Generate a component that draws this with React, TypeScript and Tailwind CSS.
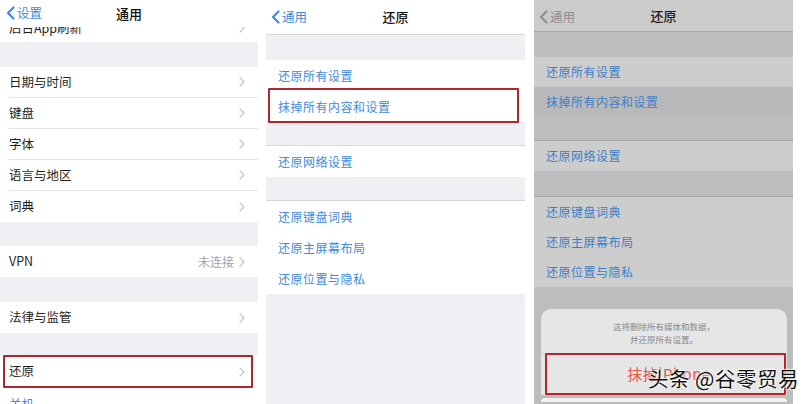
import React from 'react';

const font = { fontFamily: '"Noto Sans CJK SC", "Noto Sans", sans-serif' };

const Chevron = ({ color = '#c4c4c8' }: { color?: string }) => (
  <svg width="6" height="10" viewBox="0 0 6 10" fill="none">
    <polyline points="1,1 5,5 1,9" stroke={color} strokeWidth="1.2" strokeLinecap="round" strokeLinejoin="round" />
  </svg>
);

const BackChevron = ({ color }: { color: string }) => (
  <svg width="9" height="14" viewBox="0 0 9 14" fill="none">
    <polyline points="7.5,1.5 2,7 7.5,12.5" stroke={color} strokeWidth="2.2" strokeLinecap="round" strokeLinejoin="round" />
  </svg>
);

const Row = ({ label, right, last }: { label: string; right?: string; last?: boolean }) => (
  <div className="h-[31px] shrink-0 flex items-center pl-[9px] bg-white">
    <div className={`flex-1 h-full flex items-center pr-[13px] ${last ? '' : 'border-b border-[#e3e3e6]'}`}>
      <span className="flex-1 text-[12.5px] text-[#1f1f1f]">{label}</span>
      {right && <span className="text-[12px] text-[#a3a3a8] mr-[5px]">{right}</span>}
      <Chevron />
    </div>
  </div>
);

const LeftPanel = () => (
  <div className="w-[258px] h-full bg-[#efeff4] flex flex-col overflow-hidden">
    <div className="h-[27px] shrink-0 bg-white relative z-10 flex items-center justify-center">
      <div className="absolute left-[6px] top-[5px] flex items-center gap-[2px] text-[#3d8ae0] text-[12.5px] leading-[16px]">
        <BackChevron color="#3d8ae0" />
        <span>设置</span>
      </div>
      <span className="text-[13px] text-[#111] font-medium">通用</span>
    </div>
    <div className="h-[15px] shrink-0 bg-white overflow-hidden flex items-start pl-[9px] pr-[13px]">
      <span className="flex-1 text-[12.5px] text-[#1f1f1f] leading-[16px] -mt-[7px]">后台App刷新</span>
      <div className="-mt-[4px]"><Chevron /></div>
    </div>
    <div className="h-[25px] shrink-0" />
    <Row label="日期与时间" />
    <Row label="键盘" />
    <Row label="字体" />
    <Row label="语言与地区" />
    <Row label="词典" last />
    <div className="h-[24px] shrink-0" />
    <Row label="VPN" right="未连接" last />
    <div className="h-[25px] shrink-0" />
    <Row label="法律与监管" last />
    <div className="h-[23px] shrink-0" />
    <div className="relative shrink-0">
      <Row label="还原" last />
      <div className="absolute left-[3px] right-[5px] -top-[1px] -bottom-[1px] border-[2.5px] border-[#b3262e] rounded-[1px]" />
    </div>
    <div className="flex-1 shrink-0 bg-white pl-[9px] pt-[3px]">
      <span className="text-[12.5px] text-[#3d8ae0]">关机</span>
    </div>
  </div>
);

type Theme = {
  nav: string;
  gap: string;
  row: string;
  hi: string;
  blue: string;
  back: string;
  title: string;
  sep: string;
};

const light: Theme = {
  nav: 'bg-white',
  gap: 'bg-[#efeff4]',
  row: 'bg-white',
  hi: 'bg-white',
  blue: 'text-[#3d8ae0]',
  back: '#3d8ae0',
  title: 'text-[#111]',
  sep: 'border-[#d6d6da]',
};

const dim: Theme = {
  nav: 'bg-[#cbcbcb]',
  gap: 'bg-[#bdbdc0]',
  row: 'bg-[#cdcdcd]',
  hi: 'bg-[#b9b9bc]',
  blue: 'text-[#3f7dc6]',
  back: '#8e8e90',
  title: 'text-[#1a1a1a]',
  sep: 'border-[#a9a9ac]',
};

const BlueRow = ({ label, t, h = 'h-[31px]', bg }: { label: string; t: Theme; h?: string; bg?: string }) => (
  <div className={`${h} shrink-0 flex items-center pl-[12px] ${bg ?? t.row}`}>
    <span className={`text-[12px] tracking-[0.5px] ${t.blue}`}>{label}</span>
  </div>
);

const ResetPanel = ({ t, dimmed }: { t: Theme; dimmed?: boolean }) => {
  const rh = dimmed ? 'h-[30px]' : 'h-[31px]';
  return (
    <div className={`w-[259px] h-full flex flex-col overflow-hidden relative ${t.gap}`}>
      <div className={`${dimmed ? 'h-[32px]' : 'h-[35px]'} shrink-0 ${t.nav} border-b ${t.sep} relative flex items-center justify-center`}>
        <div className="absolute left-[5px] top-[8px] flex items-center gap-[2px] text-[12.5px]">
          <BackChevron color={t.back} />
          <span style={{ color: t.back }}>通用</span>
        </div>
        <span className={`text-[13px] font-medium ${t.title}`}>还原</span>
      </div>
      <div className="h-[25px] shrink-0" />
      {dimmed ? (
        <>
          <BlueRow label="还原所有设置" t={t} h={rh} />
          <BlueRow label="抹掉所有内容和设置" t={t} h={rh} bg={t.hi} />
        </>
      ) : (
        <>
          <BlueRow label="还原所有设置" t={t} h={rh} />
          <div className="relative shrink-0">
            <BlueRow label="抹掉所有内容和设置" t={t} h={rh} />
            <div className="absolute left-[2px] right-[6px] -top-[3px] -bottom-[1px] border-[2.5px] border-[#b3262e] rounded-[1px]" />
          </div>
        </>
      )}
      <div className={`h-[24px] shrink-0 border-b ${t.sep}`} />
      <BlueRow label="还原网络设置" t={t} h={rh} />
      <div className={`${dimmed ? 'h-[26px]' : 'h-[24px]'} shrink-0 border-b ${t.sep}`} />
      <BlueRow label="还原键盘词典" t={t} h={rh} />
      <BlueRow label="还原主屏幕布局" t={t} h={rh} />
      <BlueRow label="还原位置与隐私" t={t} h={rh} />
      {dimmed && (
        <div className="flex-1 pl-[7px] pr-[6px] pt-[22px] flex flex-col">
          <div className="bg-[#e6e6e6] rounded-t-[10px] pt-[11px] pb-[7px] flex flex-col items-center text-[8.5px] leading-[13px] text-[#8a8a8a]">
            <span>这将删除所有媒体和数据，</span>
            <span>并还原所有设置。</span>
          </div>
          <div className="relative h-[42px] shrink-0 bg-[#e6e6e6] border-t border-[#cfcfcf] flex items-center justify-center">
            <span className="text-[15px] text-[#e4574d] tracking-[0.5px] ml-[10px]">抹掉iPhone</span>
            <div className="absolute left-[4px] right-[1px] -top-[1px] bottom-0 border-[2.5px] border-[#b3262e] rounded-[1px]" />
          </div>
          <div className="h-[4px] shrink-0 mt-[3px] bg-[#f2f2f2] rounded-t-[8px]" />
        </div>
      )}
    </div>
  );
};

export default function App() {
  return (
    <div className="w-[807px] h-[404px] bg-white flex relative overflow-hidden" style={font}>
      <LeftPanel />
      <div className="ml-[8px]">
        <ResetPanel t={light} />
      </div>
      <div className="ml-[9px]">
        <ResetPanel t={dim} dimmed />
      </div>
      <div
        className="absolute left-[648px] top-[364px] text-[20.5px] leading-[28px] text-[#111] tracking-[0.5px]"
        style={{ textShadow: '0 0 2px #fff, 0 0 2px #fff, 0 0 3px #fff' }}
      >
        头条 @谷零贸易
      </div>
    </div>
  );
}
